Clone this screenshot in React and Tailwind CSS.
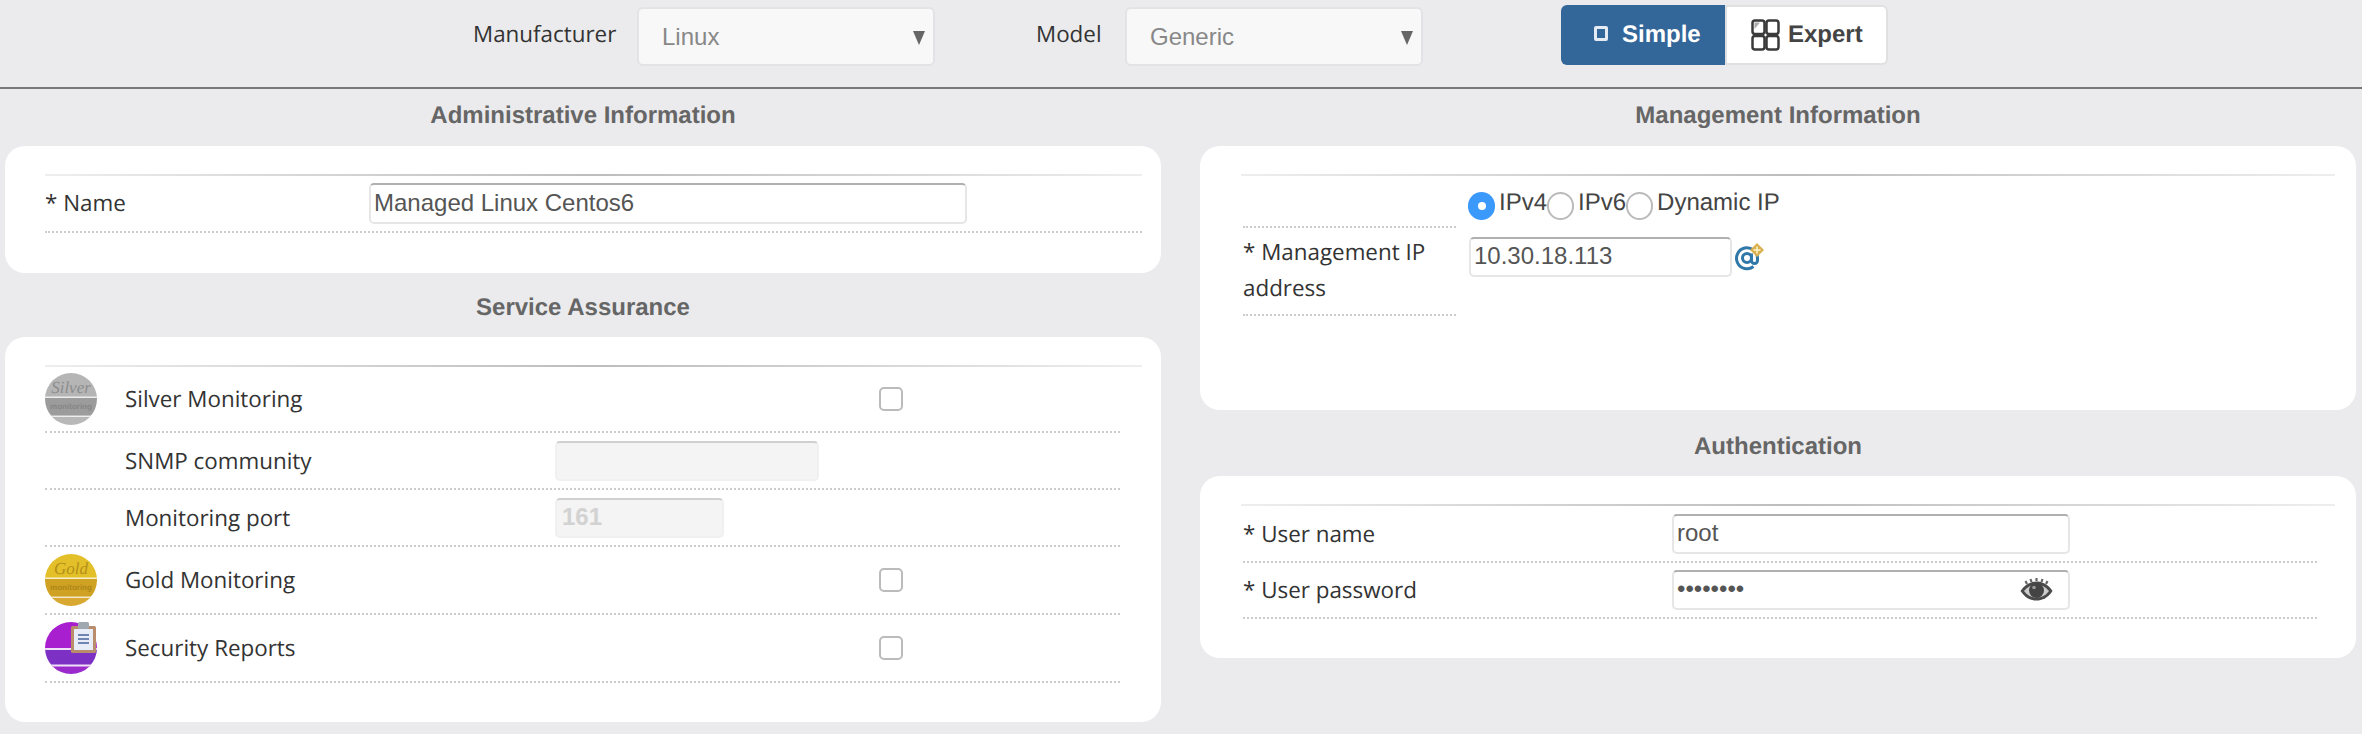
const sans = "font-['Liberation_Sans',Arial,sans-serif]";
const label = "font-['Open_Sans',sans-serif] text-[22.4px] text-[#333]";
const heading = "font-['Liberation_Sans',Arial,sans-serif] font-bold text-[24px] text-[#666] text-center";
const fieldBase = "rounded-[5px] border-2 border-[#e6e6e6] border-t-[#b0b0b0] bg-white px-[3px] pb-[2px] text-[24px] text-[#555] outline-none font-['Liberation_Sans',Arial,sans-serif]";
const fieldOff = "rounded-[5px] border-2 border-[#f0f0f0] border-t-[#d0d0d0] bg-[#f4f4f4] px-[5px] pb-[2px] text-[24px] font-bold text-[#d2d2d2] outline-none font-['Liberation_Sans',Arial,sans-serif]";
const headLine = "h-[2px] bg-linear-to-r from-[#eeeeee] via-[#bdbdbd] to-[#eeeeee]";
const dotted = "border-b-2 border-dotted border-[#cccccc]";

function Dropdown({ value, width }) {
  return (
    <div className={`relative ${width}`}>
      <select
        defaultValue={value}
        className={`${sans} h-[59px] w-full appearance-none rounded-[6px] border-2 border-[#e3e3e5] bg-[#f8f8f8] pl-[23px] text-[24px] text-[#888] outline-none`}
      >
        <option>{value}</option>
      </select>
      <svg className="absolute right-[10px] top-[24px] h-[14px] w-[12px]" viewBox="0 0 12 14">
        <path d="M0 0h12L6 14z" fill="#666" />
      </svg>
    </div>
  );
}

function ModeSwitch() {
  return (
    <div className={`${sans} flex h-[60px] w-[327px] overflow-hidden rounded-[6px] text-[24px] font-bold`}>
      <div className="flex w-[164px] items-center gap-[14px] bg-[#336699] pl-[33px] text-white">
        <span className="mb-[4px] h-[15px] w-[14px] rounded-[2px] border-[3px] border-[#e4ebf2]" />
        Simple
      </div>
      <div className="flex flex-1 items-center gap-[8px] rounded-r-[6px] border-2 border-[#e0e0e0] bg-white pl-[24px] text-[#444]">
        <svg className="h-[32px] w-[29px]" viewBox="0 0 29 32" fill="none" stroke="#3a3a3a" strokeWidth="2.500">
          <rect x="1.500" y="1.500" width="12" height="13.500" rx="2.500" />
          <rect x="15.500" y="1.500" width="12" height="13.500" rx="2.500" />
          <rect x="1.500" y="17" width="12" height="13.500" rx="2.500" />
          <rect x="15.500" y="17" width="12" height="13.500" rx="2.500" />
          <path d="M3.500 10L9 3.500H3.500z" fill="#aaa" stroke="none" />
        </svg>
        Expert
      </div>
    </div>
  );
}

function Check() {
  return <input type="checkbox" className="h-[24px] w-[24px] appearance-none rounded-[5px] border-2 border-[#bbbbbb] bg-white" />;
}

function Radio({ on }) {
  if (on) {
    return (
      <span className="flex h-[28px] w-[27px] items-center justify-center rounded-full bg-[#3b99fc]">
        <span className="h-[8px] w-[8px] rounded-full bg-white" />
      </span>
    );
  }
  return <span className="h-[28px] w-[27px] rounded-full border-2 border-[#bbbbbb] bg-white" />;
}

function MonitorBadge({ word, top, mid, bottom, ink }) {
  return (
    <svg className="h-[52px] w-[52px]" viewBox="0 0 52 52">
      <defs>
        <clipPath id={`clip-${word}`}><circle cx="26" cy="26" r="26" /></clipPath>
      </defs>
      <g clipPath={`url(#clip-${word})`}>
        <rect width="52" height="25" fill={top} />
        <rect y="25" width="52" height="18" fill={mid} />
        <rect y="43" width="52" height="9" fill={bottom} />
        <rect y="23.500" width="52" height="1.500" fill="#fff" opacity=".75" />
        <rect y="42.500" width="52" height="1.500" fill="#fff" opacity=".75" />
      </g>
      <text x="26" y="20" textAnchor="middle" fontSize="17" fontStyle="italic" fontFamily="Liberation Serif" fill={ink} opacity=".7">{word}</text>
      <text x="26" y="36" textAnchor="middle" fontSize="8" fontWeight="bold" fontFamily="Liberation Sans" fill={ink} opacity=".7">monitoring</text>
    </svg>
  );
}

function ReportBadge() {
  return (
    <svg className="h-[52px] w-[52px]" viewBox="0 0 52 52">
      <defs>
        <clipPath id="clip-report"><circle cx="26" cy="26" r="26" /></clipPath>
      </defs>
      <g clipPath="url(#clip-report)">
        <rect width="52" height="27" fill="#a81fd0" />
        <rect y="27" width="52" height="16" fill="#7d30c4" />
        <rect y="43" width="52" height="9" fill="#9a2acb" />
        <rect y="26" width="52" height="2" fill="#f0e0f8" />
        <rect y="42.500" width="52" height="2" fill="#f0e0f8" />
      </g>
      <rect x="26" y="4" width="25" height="27" rx="1.500" fill="#b98d6c" />
      <rect x="29" y="7" width="19" height="21" fill="#e8ecf6" />
      <rect x="33" y="0" width="11" height="7" rx="1.500" fill="#a0a8b0" />
      <path d="M33 13h11M33 17h11M33 21h11" stroke="#6f84b0" strokeWidth="2" />
    </svg>
  );
}

function AtPlus() {
  return (
    <svg className="h-[32px] w-[32px]" viewBox="0 0 32 32">
      <g fill="none" stroke="#2f78a8" strokeWidth="3">
        <circle cx="14" cy="15" r="4.500" />
        <path d="M18.500 10.500v7a3 3 0 0 0 6 0V15a10.500 10.500 0 1 0-4 8.500" />
      </g>
      <path d="M24 0l7 7-7 7-7-7z" fill="#d8b050" />
      <path d="M24 3.500v7M20.500 7h7" stroke="#fff4c8" strokeWidth="1.500" />
    </svg>
  );
}

function EyeIcon({ className }) {
  return (
    <svg className={className} viewBox="0 0 33 26">
      <path d="M7 8L5.500 5M11.500 6L10.500 3M16.500 5V2M21.500 6l1-3M26 8l1.500-3" stroke="#666" strokeWidth="2.200" />
      <path d="M0.500 15C5 8 11 5.500 16.500 5.500S28 8 32.500 15C28 22 22 24.500 16.500 24.500S5 22 0.500 15z" fill="#4a4a4a" />
      <path d="M4 15C8 10.500 12 8.500 16.500 8.500S25 10.500 29 15C25 20 21 21.500 16.500 21.500S8 20 4 15z" fill="#ccc" />
      <circle cx="16.500" cy="14.500" r="7.500" fill="#444" />
      <circle cx="14" cy="11.500" r="1.800" fill="#999" />
    </svg>
  );
}

function ServiceRow({ icon, name, check, children, height }) {
  return (
    <div className={`${dotted} flex items-center ${height}`}>
      <div className="w-[80px] shrink-0">{icon}</div>
      <div className={`${label} w-[430px] shrink-0`}>{name}</div>
      {children}
      {check && <div className="ml-[324px] flex"><Check /></div>}
    </div>
  );
}

export default function App() {
  return (
    <div className="h-[734px] overflow-hidden bg-[#ebebed] [text-rendering:geometricPrecision]">
      {/* top toolbar */}
      <div className="flex h-[89px] items-start border-b-2 border-[#777777] pl-[473px]">
        <div className={`${label} mt-[17px] w-[164px]`}>Manufacturer</div>
        <div className="mt-[7px]"><Dropdown value="Linux" width="w-[298px]" /></div>
        <div className={`${label} ml-[101px] mt-[17px] w-[89px]`}>Model</div>
        <div className="mt-[7px]"><Dropdown value="Generic" width="w-[298px]" /></div>
        <div className="ml-[138px] mt-[5px]"><ModeSwitch /></div>
      </div>

      <div className="grid grid-cols-[1156px_1156px] gap-x-[39px] pl-[5px]">
        <div>
          <h2 className={`${heading} flex h-[57px] items-center justify-center pb-[3px]`}>Administrative Information</h2>
          <section className="h-[127px] rounded-[20px] bg-white pl-[40px] pr-[19px] pt-[28px]">
            <div className={headLine} />
            <div className={`${dotted} flex h-[57px] items-center`}>
              <div className={`${label} w-[324px] pb-[2px]`}>* Name</div>
              <input readOnly value="Managed Linux Centos6" className={`${fieldBase} h-[41px] w-[598px]`} />
            </div>
          </section>

          <h2 className={`${heading} flex h-[64px] items-center justify-center pt-[6px]`}>Service Assurance</h2>
          <section className="h-[385px] rounded-[20px] bg-white pl-[40px] pr-[19px] pt-[28px]">
            <div className={headLine} />
            <div className="pr-[22px]">
              <ServiceRow height="h-[66px]" name="Silver Monitoring" check icon={<MonitorBadge word="Silver" top="#b5b5b5" mid="#9c9c9c" bottom="#b8b8b8" ink="#7c7c7c" />} />
              <ServiceRow height="h-[57px]" name="SNMP community">
                <input disabled className={`${fieldOff} h-[40px] w-[264px]`} />
              </ServiceRow>
              <ServiceRow height="h-[57px]" name="Monitoring port">
                <input disabled value="161" className={`${fieldOff} h-[40px] w-[169px]`} />
              </ServiceRow>
              <ServiceRow height="h-[68px]" name="Gold Monitoring" check icon={<MonitorBadge word="Gold" top="#e3c02a" mid="#cfa224" bottom="#d8a830" ink="#a07a10" />} />
              <ServiceRow height="h-[68px]" name="Security Reports" check icon={<ReportBadge />} />
            </div>
          </section>
        </div>

        <div>
          <h2 className={`${heading} flex h-[57px] items-center justify-center pb-[3px]`}>Management Information</h2>
          <section className="h-[264px] rounded-[20px] bg-white pl-[41px] pr-[21px] pt-[28px]">
            <div className={headLine} />
            <div className="ml-[2px] grid grid-cols-[213px_1fr] gap-x-[12px]">
              <div className={`${dotted} h-[52px]`} />
              <div className={`${sans} flex h-[52px] items-start pt-[16px] text-[24px] leading-[22px] text-[#444]`}>
                <Radio on />
                <span className="ml-[4px]">IPv4</span>
                <Radio />
                <span className="ml-[4px]">IPv6</span>
                <Radio />
                <span className="ml-[4px]">Dynamic IP</span>
              </div>
              <div className={`${dotted} ${label} h-[88px] pt-[6px] leading-[36px]`}>* Management IP address</div>
              <div className="flex items-start pt-[9px]">
                <input readOnly value="10.30.18.113" className={`${fieldBase} ml-[1px] h-[40px] w-[263px]`} />
                <div className="ml-[1px] mt-[6px]"><AtPlus /></div>
              </div>
            </div>
          </section>

          <h2 className={`${heading} flex h-[66px] items-center justify-center pt-[8px]`}>Authentication</h2>
          <section className="h-[182px] rounded-[20px] bg-white pl-[41px] pr-[21px] pt-[28px]">
            <div className={headLine} />
            <div className="ml-[2px] pr-[18px]">
              <div className={`${dotted} flex h-[57px] items-center`}>
                <div className={`${label} w-[429px]`}>* User name</div>
                <input readOnly value="root" className={`${fieldBase} h-[40px] w-[398px]`} />
              </div>
              <div className={`${dotted} flex h-[56px] items-center`}>
                <div className={`${label} w-[429px]`}>* User password</div>
                <div className="relative">
                  <input readOnly type="password" value="password" className={`${fieldBase} h-[40px] w-[398px]`} />
                  <EyeIcon className="absolute right-[17px] top-[6px] h-[26px] w-[33px]" />
                </div>
              </div>
            </div>
          </section>
        </div>
      </div>
    </div>
  );
}
